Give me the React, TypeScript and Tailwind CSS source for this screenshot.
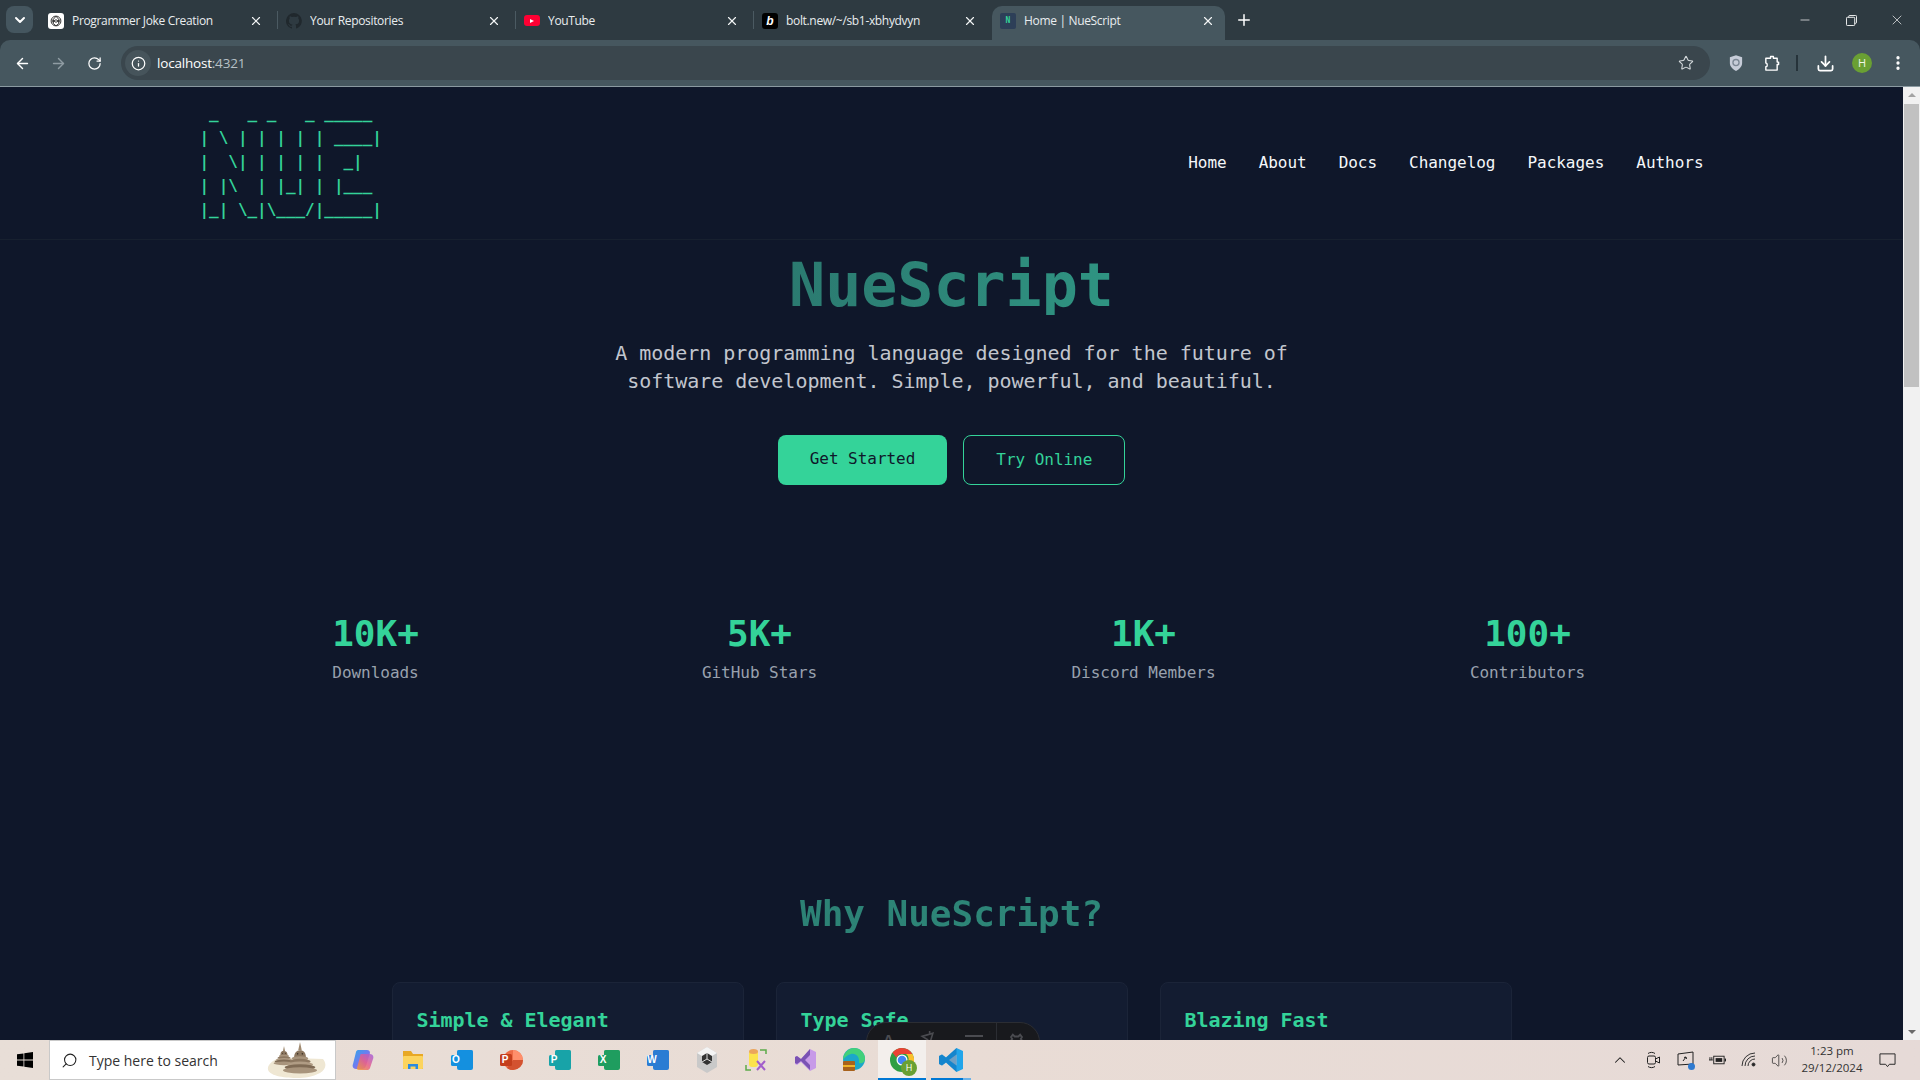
import React from "react";
import { ArrowLeft, ArrowRight, ChevronDown, ChevronUp, Download, EllipsisVertical, Info, Minus, Plus, RotateCw, Search, Star, Volume2, X } from "lucide-react";

const ui = "font-['Open_Sans','Liberation_Sans',sans-serif]";
const mono = "font-['DejaVu_Sans_Mono','Liberation_Mono',monospace]";

const ascii = ` _   _ _   _ _____ 
| \\ | | | | | ____|
|  \\| | | | |  _|  
| |\\  | |_| | |___ 
|_| \\_|\\___/|_____|`;

function OpenAI() {
  return (
    <span className="flex h-4 w-4 items-center justify-center rounded-[3px] bg-white">
      <svg viewBox="0 0 16 16" className="h-3.5 w-3.5" fill="none" stroke="#333" strokeWidth="1.1">
        <circle cx="8" cy="8" r="5.6" />
        <path d="M8 2.5 5 6v5l3 2.5M8 2.5 11 6v5l-3 2.5M3 6.5l5 3 5-3M3 9.5l5-3 5 3" />
      </svg>
    </span>
  );
}
function GitHub() {
  return (
    <svg viewBox="0 0 16 16" className="h-4 w-4" fill="#20282d">
      <path d="M8 0a8 8 0 0 0-2.5 15.6c.4 0 .5-.2.5-.4v-1.4c-2.2.5-2.7-1-2.7-1-.4-.9-.9-1.200-.9-1.200-.7-.5.1-.5.1-.5.8.1 1.200.8 1.200.8.7 1.200 1.900.9 2.300.7 0-.5.3-.9.5-1.100-1.800-.2-3.600-.9-3.600-4 0-.9.3-1.600.8-2.100-.1-.2-.4-1 .1-2.100 0 0 .7-.2 2.200.8a7.600 7.600 0 0 1 4 0c1.500-1 2.200-.8 2.200-.8.4 1.100.2 1.900.1 2.100.5.6.8 1.300.8 2.100 0 3.100-1.900 3.700-3.700 3.900.3.300.6.800.6 1.500v2.200c0 .2.100.5.600.4A8 8 0 0 0 8 0z" />
    </svg>
  );
}
function YouTube() {
  return (
    <span className="flex h-[11px] w-4 items-center justify-center rounded-[3px] bg-[#ff0033]">
      <span className="h-0 w-0 border-y-[2.5px] border-l-[4px] border-y-transparent border-l-white" />
    </span>
  );
}
function Bolt() {
  return <span className="flex h-4 w-4 items-center justify-center rounded-[3px] bg-black font-['Liberation_Sans',sans-serif] text-[12px] font-bold italic leading-none text-white">b</span>;
}
function NueFav() {
  return <span className={`flex h-4 w-4 items-center justify-center rounded-[2px] bg-[#2d3f58] ${mono} text-[8px] font-bold leading-none text-[#34d399]`}>N</span>;
}

const tabs = [
  { t: "Programmer Joke Creation", i: <OpenAI />, a: false },
  { t: "Your Repositories", i: <GitHub />, a: false },
  { t: "YouTube", i: <YouTube />, a: false },
  { t: "bolt.new/~/sb1-xbhydvyn", i: <Bolt />, a: false },
  { t: "Home | NueScript", i: <NueFav />, a: true },
];

function Tab({ t, i, a, last }: { t: string; i: React.ReactNode; a: boolean; last: boolean }) {
  return (
    <div className={`relative flex h-[34px] shrink-0 items-center pb-[5px] pl-2 ${a ? "w-[233px] rounded-t-[10px] bg-[#46575f] pr-[10px]" : "w-[238px] pr-[15px]"}`}>
      <span className="flex w-4 shrink-0 items-center justify-center">{i}</span>
      <span className="ml-2 flex-1 truncate text-[12px] tracking-[-0.33px] text-[#e9edef]">{t}</span>
      <X className="h-[14px] w-[14px] text-[#f2f4f5]" strokeWidth={2} />
      {!last && !a && <span className="absolute right-0 top-[5px] h-[18px] w-px bg-[#4b5a62]" />}
    </div>
  );
}

function TabStrip() {
  return (
    <div className={`flex h-10 shrink-0 items-center bg-[#2e3a41] ${ui}`}>
      <div className="ml-[6px] mr-[7px] mt-[6px] flex h-[27px] w-[27px] items-center justify-center self-start rounded-lg bg-[#45565f]">
        <ChevronDown className="h-4 w-4 text-white" strokeWidth={3} />
      </div>
      <div className="flex self-end">
        {tabs.map((x, n) => (
          <Tab key={x.t} t={x.t} i={x.i} a={x.a} last={n === 3} />
        ))}
      </div>
      <Plus className="ml-[10px] h-[18px] w-[18px] text-white" strokeWidth={2} />
      <div className="flex-1" />
      <div className="flex items-center text-white">
        <span className="flex w-[46px] justify-center"><Minus className="h-[14px] w-[14px]" strokeWidth={1.2} /></span>
        <span className="flex w-[46px] justify-center">
          <svg viewBox="0 0 12 12" className="h-[11px] w-[11px]" fill="none" stroke="white" strokeWidth="1">
            <rect x="0.5" y="2.5" width="9" height="9" rx="1" />
            <path d="M3 2.500V1.500a1 1 0 0 1 1-1h6.500a1 1 0 0 1 1 1V8a1 1 0 0 1-1 1H9.500" />
          </svg>
        </span>
        <span className="flex w-[46px] justify-center"><X className="h-[16px] w-[16px]" strokeWidth={1} /></span>
      </div>
    </div>
  );
}

function Toolbar() {
  return (
    <div className={`flex h-[47px] shrink-0 items-center rounded-t-[10px] border-b border-[#8b9aa1] bg-[#46575f] pr-[10px] ${ui}`}>
      <div className="flex w-[121px] shrink-0 items-center">
        <span className="flex w-[44px] justify-center"><ArrowLeft className="ml-[1px] h-[17px] w-[17px] text-white" strokeWidth={2} /></span>
        <span className="flex w-[28px] justify-center"><ArrowRight className="h-[17px] w-[17px] text-[#8f9ca3]" strokeWidth={2} /></span>
        <span className="flex w-[44px] justify-center"><RotateCw className="h-[15px] w-[15px] text-white" strokeWidth={2} /></span>
      </div>
      <div className="flex h-[34px] w-[1589px] shrink-0 items-center rounded-full bg-[#3a464d] pl-[4px] pr-[16px]">
        <span className="flex h-[26px] w-[26px] items-center justify-center rounded-full bg-[#46545b]">
          <Info className="h-[15px] w-[15px] text-white" strokeWidth={2} />
        </span>
        <span className="ml-[6px] flex-1 text-[13.5px] tracking-[-0.2px] text-white">localhost<span className="text-[#b6c0c5]">:4321</span></span>
        <Star className="h-[16px] w-[16px] text-[#d4d9dc]" strokeWidth={1.6} />
      </div>
      <svg viewBox="0 0 16 18" className="ml-[19px] h-[16px] w-[14px]">
        <path d="M8 0 15 2.500V9c0 4-3 7-7 9-4-2-7-5-7-9V2.500z" fill="#c6ccd8" />
        <circle cx="8" cy="8.500" r="3.500" fill="none" stroke="#7c8794" strokeWidth="1.500" />
      </svg>
      <svg viewBox="0 0 18 18" className="ml-[20px] h-[17px] w-[17px]" fill="none" stroke="white" strokeWidth="1.500" strokeLinejoin="round">
        <path d="M6 3.500h2V1.500h3v2h4v4h1.500v2.500H15v6H3v-3.500c2 0 2-4 0-4V3.500z" />
      </svg>
      <span className="ml-[16px] h-[16px] w-[2px] bg-[#26333a]" />
      <Download className="ml-[18px] h-[19px] w-[19px] text-white" strokeWidth={2.2} />
      <span className="ml-[17px] flex h-5 w-5 items-center justify-center rounded-full bg-[#6aa033] text-[11px] text-[#f1f5e9]">H</span>
      <EllipsisVertical className="ml-[17px] h-[18px] w-[18px] text-white" strokeWidth={2.4} />
    </div>
  );
}

function Scrollbar() {
  return (
    <div className="flex w-[17px] shrink-0 flex-col items-center bg-[#f1f1f1]">
      <span className="mt-[6px] h-0 w-0 border-x-[4px] border-b-[4px] border-x-transparent border-b-[#a3a3a3]" />
      <span className="mt-[7px] h-[283px] w-[15px] bg-[#c1c1c1]" />
      <span className="flex-1" />
      <span className="mb-[6px] h-0 w-0 border-x-[4px] border-t-[4px] border-x-transparent border-t-[#6b6b6b]" />
    </div>
  );
}

const navs = ["Home", "About", "Docs", "Changelog", "Packages", "Authors"];
const stats = [
  ["10K+", "Downloads"],
  ["5K+", "GitHub Stars"],
  ["1K+", "Discord Members"],
  ["100+", "Contributors"],
];
const cards = ["Simple & Elegant", "Type Safe", "Blazing Fast"];

function Page() {
  return (
    <div className={`relative min-w-0 flex-1 overflow-hidden bg-[#0f172a] tracking-[-0.002em] ${mono}`}>
      <header className="border-b border-[#17202f]">
        <div className="mx-auto flex max-w-[1536px] items-center justify-between px-4 py-4">
          <pre className={`${mono} -translate-y-px text-[16px] font-bold leading-6 tracking-[-0.002em] text-[#34d399]`}>{ascii}</pre>
          <nav className="flex gap-8 text-[16px] font-medium leading-6 text-[#f5f7fa]">
            {navs.map((n) => <span key={n}>{n}</span>)}
          </nav>
        </div>
      </header>

      <section className="flex flex-col items-center pt-[15px]">
        <h1 className="bg-gradient-to-r from-[#2b7a70] to-[#2f9482] bg-clip-text text-[60px] font-bold leading-[60px] text-transparent">NueScript</h1>
        <p className="mt-6 max-w-[700px] text-center text-[20px] leading-7 text-[#c2c6ce]">
          A modern programming language designed for the future of software development. Simple, powerful, and beautiful.
        </p>
        <div className="mt-10 flex items-center gap-4">
          <button className="h-[50px] rounded-lg bg-[#34d399] px-8 pb-[2px] text-[16px] font-medium text-[#0f172a]">Get Started</button>
          <button className="h-[50px] rounded-lg border border-[#34d399] px-8 text-[16px] font-medium text-[#34d399]">Try Online</button>
        </div>
      </section>

      <section className="mx-auto mt-[129px] grid max-w-[1536px] grid-cols-4">
        {stats.map(([a, b]) => (
          <div key={b} className="flex flex-col items-center">
            <span className="text-[36px] font-bold leading-10 text-[#34d399]">{a}</span>
            <span className="mt-[7px] text-[16px] leading-6 text-[#99a1ae]">{b}</span>
          </div>
        ))}
      </section>

      <section className="mx-auto mt-[209px] max-w-[1152px] px-4">
        <h2 className="bg-gradient-to-r from-[#2b7a70] to-[#2f8f7e] bg-clip-text text-center text-[36px] font-bold leading-10 text-transparent">Why NueScript?</h2>
        <div className="mt-12 grid grid-cols-3 gap-8">
          {cards.map((c) => (
            <div key={c} className="h-[200px] rounded-lg border border-[#1b2438] bg-[#131c31] px-6 pt-[23px]">
              <h3 className="text-[20px] font-semibold leading-7 text-[#34d399]">{c}</h3>
            </div>
          ))}
        </div>
      </section>

      <div className="absolute left-[866px] top-[935px] flex h-[40px] w-[174px] items-start rounded-t-[20px] border border-[#2b2d33] bg-[#18191d] pt-[9px]">
        <span className="ml-[14px] w-[15px] text-center font-['Liberation_Sans',sans-serif] text-[15px] font-bold leading-4 text-[#4a4b50]">A</span>
        <svg viewBox="0 0 14 14" className="ml-[24px] mt-[-1px] h-[15px] w-[15px]" fill="none" stroke="#4a4b50" strokeWidth="1.500"><path d="M2 5l10-3-3 10-2-4zM9 0v2" /></svg>
        <span className="ml-[30px] mt-[3px] h-[2px] w-[18px] bg-[#4a4b50]" />
        <span className="ml-[13px] -mt-[9px] h-[40px] w-px bg-[#2b2d33]" />
        <svg viewBox="0 0 14 14" className="ml-[11px] -mt-[1px] h-[17px] w-[17px]" fill="none" stroke="#4a4b50" strokeWidth="1.500"><path d="M4 3l1.500 1.500h3L10 3l1.500 2-1 1.500 1.500 2v5H2v-5l1.500-2-1-1.500z" /></svg>
      </div>
    </div>
  );
}

const Tile = ({ c }: { c: string }) => (
  <svg viewBox="0 0 24 24" className="h-6 w-6">
    <rect x="7" y="2" width="16" height="20" rx="2" fill={c} />
    <rect x="7" y="2" width="16" height="7" rx="2" fill={c} opacity="0.7" />
    <rect x="1" y="7" width="11" height="11" rx="1.500" fill={c} />
  </svg>
);

function AppIcon({ children, w }: { children: React.ReactNode; w?: string }) {
  return <span className={`flex h-full shrink-0 items-center justify-center ${w ?? "w-[49px]"}`}>{children}</span>;
}

const Letter = ({ l }: { l: string }) => <span className="absolute left-[1px] top-[6px] w-[11px] text-center font-['Liberation_Sans',sans-serif] text-[10px] font-bold leading-[12px] text-white">{l}</span>;

function Office({ c, l }: { c: string; l: string }) {
  return (
    <span className="relative block h-6 w-6">
      <Tile c={c} />
      <Letter l={l} />
    </span>
  );
}

function Stupa() {
  const tiers = (x: number, y: number, s: number) => (
    <g>
      <path d={`M${x} ${y}l${1.5 * s} ${7 * s}h${-3 * s}z`} fill="#a08a70" />
      <path d={`M${x - 5 * s} ${y + 13 * s}c0-4 ${2 * s}-${6 * s} ${5 * s}-${6 * s}s${5 * s} ${2 * s} ${5 * s} ${6 * s}z`} fill="#8c7760" />
      <ellipse cx={x} cy={y + 14 * s} rx={7 * s} ry={2 * s} fill="#a8947c" />
      <ellipse cx={x} cy={y + 16.5 * s} rx={9 * s} ry={2.2 * s} fill="#8c7760" />
      <ellipse cx={x} cy={y + 19 * s} rx={11 * s} ry={2.4 * s} fill="#b09c84" />
      <ellipse cx={x} cy={y + 21.5 * s} rx={13 * s} ry={2.6 * s} fill="#7f6b55" />
      <ellipse cx={x} cy={y + 24 * s} rx={14.5 * s} ry={2.6 * s} fill="#a8947c" />
      <circle cx={x - 2 * s} cy={y + 10 * s} r={0.7 * s} fill="#3e3226" />
      <circle cx={x + 2 * s} cy={y + 10 * s} r={0.7 * s} fill="#3e3226" />
    </g>
  );
  return (
    <svg viewBox="0 0 60 38" className="mr-[8px] h-[38px] w-[60px]">
      <path d="M2 24c6-8 16-8 24-7l30 1c4 5 3 10-3 14-8 4-14 5-24 5-14 0-33-3-27-13z" fill="#efe7d3" />
      {tiers(17, 5, 0.72)}
      {tiers(33, 1, 1.18)}
    </svg>
  );
}

function Taskbar() {
  return (
    <div className={`flex h-10 shrink-0 items-center bg-gradient-to-r from-[#e8ded7] via-[#e9dcd5] to-[#e6dad7] ${ui}`}>
      <span className="flex w-[49px] shrink-0 justify-center">
        <svg viewBox="0 0 16 16" className="h-4 w-4" fill="#000"><path d="M0 2.300 6.500 1.400V7.600H0zM7.300 1.300 16 0V7.600H7.300zM0 8.400H6.500V14.600L0 13.700zM7.300 8.400H16V16L7.300 14.700z" /></svg>
      </span>
      <div className="flex h-full w-[287px] shrink-0 items-center border border-[#c9c9c9] bg-white pl-[11px]">
        <Search className="h-[17px] w-[17px] -scale-x-100 text-[#222]" strokeWidth={1.5} />
        <span className="ml-[11px] flex-1 text-[14px] text-[#333]">Type here to search</span>
        <Stupa />
      </div>
      <div className="ml-[2px] flex h-full items-center">
        <AppIcon w="w-[50px]">
          <svg viewBox="0 0 24 24" className="h-6 w-6">
            <defs>
              <linearGradient id="cp1" x1="0" y1="0" x2="1" y2="1"><stop offset="0" stopColor="#2ea8e8" /><stop offset="0.5" stopColor="#6f7bf0" /><stop offset="1" stopColor="#e85fb0" /></linearGradient>
              <linearGradient id="cp2" x1="0" y1="1" x2="1" y2="0"><stop offset="0" stopColor="#f0a030" /><stop offset="0.5" stopColor="#e85f8a" /><stop offset="1" stopColor="#a060e0" /></linearGradient>
            </defs>
            <path d="M7 2h9c2 0 3 1 3 3l-4 13c-.5 2-2 3-4 3H5c-3 0-4-3-3-5L5 4c.3-1 1-2 2-2z" fill="url(#cp1)" />
            <path d="M10 6h9c3 0 4 3 3 5l-3 9c-.5 1.500-1.500 2-3 2H8c-2 0-2-1-2-2l3-11c.2-2 .5-3 1-3z" fill="url(#cp2)" opacity="0.85" />
          </svg>
        </AppIcon>
        <AppIcon>
          <svg viewBox="0 0 24 24" className="h-6 w-6">
            <path d="M2 3h8l2 3h10v15H2z" fill="#e8a825" />
            <rect x="2" y="8" width="20" height="13" rx="1" fill="#fcd45e" />
            <path d="M7 21v-5h10v5h-2.500v-2.500h-5V21z" fill="#2c8be0" />
          </svg>
        </AppIcon>
        <AppIcon><Office c="#1490df" l="O" /></AppIcon>
        <AppIcon>
          <span className="relative block h-6 w-6">
            <svg viewBox="0 0 24 24" className="h-6 w-6"><circle cx="14" cy="12" r="10" fill="#ed6c47" /><path d="M14 2a10 10 0 0 1 10 10H14z" fill="#ff8f6b" /><path d="M24 12a10 10 0 0 1-10 10 10 10 0 0 1-6-2l6-8z" fill="#d35230" /><rect x="1" y="6" width="12" height="12" rx="1.500" fill="#c43e1c" /></svg>
            <Letter l="P" />
          </span>
        </AppIcon>
        <AppIcon><Office c="#18a3a8" l="P" /></AppIcon>
        <AppIcon><Office c="#1f9d5f" l="X" /></AppIcon>
        <AppIcon><Office c="#2b7cd3" l="W" /></AppIcon>
        <AppIcon>
          <svg viewBox="0 0 24 28" className="h-7 w-6"><path d="M12 1 22 7v14l-10 6L2 21V7z" fill="#c9c9c9" /><path d="M12 1 22 7 12 13 2 7z" fill="#f4f4f4" /><path d="M12 7l5 3v6l-5 3-5-3v-6z" fill="#333" /><path d="M12 7v6m0 0 5 3m-5-3-5 3" stroke="#ddd" strokeWidth="1" /></svg>
        </AppIcon>
        <AppIcon>
          <svg viewBox="0 0 24 24" className="h-6 w-6" fill="none">
            <rect x="5" y="2" width="9" height="17" rx="3" fill="#fce34d" />
            <ellipse cx="9.500" cy="3.500" rx="4.500" ry="2.500" fill="#eba55c" />
            <path d="M16 2h6v4M2 17v5h5M20 2h2" stroke="#5caa4a" strokeWidth="1.500" />
            <path d="M13 13l8 9M21 13l-8 9" stroke="#a25ecb" strokeWidth="2" />
          </svg>
        </AppIcon>
        <AppIcon>
          <svg viewBox="0 0 24 24" className="h-6 w-6"><path d="M17 1l6 3v16l-6 3-9-9-4 3-2-1V9l2-1 4 3z" fill="#c79ae8" /><path d="M17 1 8 11l-4-3-2 1v6l2 1 4-3 9 9V17l-5-5 5-5z" fill="#7a52b3" /></svg>
        </AppIcon>
        <AppIcon>
          <span className="relative block h-6 w-6">
            <svg viewBox="0 0 24 24" className="h-6 w-6"><circle cx="12" cy="11" r="11" fill="#1ca7c9" /><path d="M12 0a11 11 0 0 1 11 11c0 3-3 5-6 4 1-6-3-10-8-9-4 1-7 4-8 6 0-6 5-12 11-12z" fill="#42d07a" /><rect x="1" y="13" width="12" height="10" rx="1" fill="#a8621c" /><rect x="1" y="17" width="12" height="2" fill="#f0b429" /></svg>
          </span>
        </AppIcon>
        <span className="relative flex h-full w-[48px] shrink-0 items-center justify-center bg-[#f3efec]">
          <span className="relative block h-6 w-6">
            <svg viewBox="0 0 24 24" className="h-6 w-6">
              <circle cx="12" cy="12" r="12" fill="#2f9e44" />
              <path d="M12 0a12 12 0 0 1 10.400 6H12a6 6 0 0 0-5.600 3.500L2.500 4.800A12 12 0 0 1 12 0z" fill="#ea4335" />
              <path d="M22.400 6A12 12 0 0 1 12 24l5-9a6 6 0 0 0-1-9z" fill="#fbc02d" />
              <circle cx="12" cy="12" r="5.500" fill="white" />
              <circle cx="12" cy="12" r="4.300" fill="#4285f4" />
            </svg>
            <span className="absolute -bottom-[4px] -right-[3px] flex h-4 w-4 items-center justify-center rounded-full bg-[#6aa033] text-[9px] text-white">H</span>
          </span>
          <span className="absolute bottom-0 left-0 right-0 h-[2px] bg-[#0078d4]" />
        </span>
        <span className="relative ml-[5px] flex h-full w-[40px] shrink-0 items-center justify-center">
          <svg viewBox="0 0 24 24" className="h-6 w-6"><path d="M17.500 0 24 3v18l-6.500 3L7 14.500 3 17.500 0 16V8l3-1.500 4 3z" fill="#22a5ea" /><path d="M17.500 6.500v11L10 12z" fill="#e8ded7" /><path d="M17.500 0 7 9.500 3 6.500 0 8v8l3 1.500 4-3L17.500 24z" fill="#0b6cb5" opacity="0.55" /></svg>
          <span className="absolute bottom-0 left-0 h-[2px] w-[32px] bg-[#0078d4]" />
          <span className="absolute bottom-0 right-0 h-[2px] w-[8px] bg-[#6db3e8]" />
        </span>
      </div>
      <div className="flex-1" />
      <div className="flex h-full items-center text-[#1c1c1c]">
        <ChevronUp className="h-[18px] w-[18px]" strokeWidth={1.4} />
        <svg viewBox="0 0 16 18" className="ml-[17px] h-[18px] w-[16px]" fill="none" stroke="#222" strokeWidth="1"><rect x="1.500" y="5" width="8" height="8" rx="1.500" /><path d="M9.500 8l4-2v6l-4-2M2 2.500c2-1.500 5-1.500 7 0M2 15.500c2 1.500 5 1.500 7 0" /></svg>
        <span className="relative ml-[15px] block h-[18px] w-[18px]">
          <svg viewBox="0 0 18 16" className="h-[16px] w-[18px]" fill="none" stroke="#222" strokeWidth="1"><path d="M1 3l15-2v12l-15 1zM6 10l3-4m0 0-2 .5M9 6l.5 2" /></svg>
          <span className="absolute -bottom-[1px] right-0 h-[7px] w-[7px] rounded-full bg-[#2f7ad0]" />
        </span>
        <svg viewBox="0 0 18 14" className="ml-[14px] h-[14px] w-[17px]"><rect x="5" y="3" width="11" height="8" fill="none" stroke="#222" /><rect x="7" y="5" width="7" height="4" fill="#222" /><rect x="16.500" y="5.500" width="1.500" height="3" fill="#222" /><path d="M0 7h4M1 4v3M3 4v3" stroke="#222" /></svg>
        <svg viewBox="0 0 16 16" className="ml-[15px] h-[16px] w-[16px]" fill="none" stroke="#333"><path d="M1 14a13 13 0 0 1 13-13M4 14a10 10 0 0 1 10-10M7 14a7 7 0 0 1 7-7" /><circle cx="12.500" cy="12.500" r="1.500" fill="#222" /></svg>
        <Volume2 className="ml-[14px] h-[17px] w-[17px]" strokeWidth={1} />
        <div className="ml-[4px] flex w-[80px] flex-col items-center pb-[2px] text-[11.5px] leading-[17px] text-[#333]">
          <span>1:23 pm</span>
          <span>29/12/2024</span>
        </div>
        <svg viewBox="0 0 18 16" className="ml-[7px] mr-[24px] h-[17px] w-[17px]" fill="none" stroke="#222"><path d="M1 1h16v11h-6l-2 2.500L7 12H1z" /></svg>
      </div>
    </div>
  );
}

export default function App() {
  return (
    <div className="flex h-[1080px] w-[1920px] flex-col overflow-hidden bg-[#2e3a41]">
      <TabStrip />
      <Toolbar />
      <div className="flex min-h-0 flex-1">
        <Page />
        <Scrollbar />
      </div>
      <Taskbar />
    </div>
  );
}
